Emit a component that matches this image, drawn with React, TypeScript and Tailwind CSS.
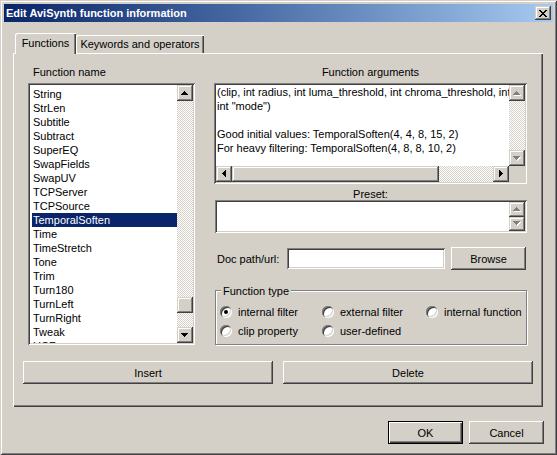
import React from 'react';

const raised =
  'shadow-[inset_-1px_-1px_#404040,inset_1px_1px_#ffffff,inset_-2px_-2px_#808080,inset_2px_2px_#d4d0c8]';
const scrollBtn =
  'shadow-[inset_-1px_-1px_#404040,inset_1px_1px_#d4d0c8,inset_-2px_-2px_#808080,inset_2px_2px_#ffffff]';
const sunken =
  'shadow-[inset_1px_1px_#808080,inset_-1px_-1px_#ffffff,inset_2px_2px_#404040,inset_-2px_-2px_#d4d0c8]';
const track =
  'bg-[image:repeating-conic-gradient(#ffffff_0%_25%,#d4d0c8_0%_50%)] bg-[length:2px_2px]';

const functions = [
  'String',
  'StrLen',
  'Subtitle',
  'Subtract',
  'SuperEQ',
  'SwapFields',
  'SwapUV',
  'TCPServer',
  'TCPSource',
  'TemporalSoften',
  'Time',
  'TimeStretch',
  'Tone',
  'Trim',
  'Turn180',
  'TurnLeft',
  'TurnRight',
  'Tweak',
  'UCF',
];

const argsText = [
  '(clip, int radius, int luma_threshold, int chroma_threshold, int scenechange,',
  'int "mode")',
  '',
  'Good initial values: TemporalSoften(4, 4, 8, 15, 2)',
  'For heavy filtering: TemporalSoften(4, 8, 8, 10, 2)',
];

type Dir = 'up' | 'down' | 'left' | 'right';

function Arrow({ dir, gray = false }: { dir: Dir; gray?: boolean }) {
  const vertical = dir === 'up' || dir === 'down';
  const w = vertical ? 7 : 4;
  const h = vertical ? 4 : 7;
  const rects = [1, 3, 5, 7].map((len, i) => {
    const off = (7 - len) / 2;
    const k = dir === 'up' || dir === 'left' ? i : 3 - i;
    return vertical ? { x: off, y: k, w: len, h: 1 } : { x: k, y: off, w: 1, h: len };
  });
  return (
    <svg width={w + 1} height={h + 1} viewBox={`0 0 ${w + 1} ${h + 1}`} shapeRendering="crispEdges">
      {gray &&
        rects.map((r, i) => (
          <rect key={'s' + i} x={r.x + 1} y={r.y + 1} width={r.w} height={r.h} fill="#ffffff" />
        ))}
      {rects.map((r, i) => (
        <rect key={i} x={r.x} y={r.y} width={r.w} height={r.h} fill={gray ? '#808080' : '#000000'} />
      ))}
    </svg>
  );
}

function ScrollButton({ dir, gray, className = '' }: { dir: Dir; gray?: boolean; className?: string }) {
  return (
    <div className={`bg-[#d4d0c8] flex items-center justify-center ${scrollBtn} ${className}`}>
      <Arrow dir={dir} gray={gray} />
    </div>
  );
}

function CloseX() {
  const px = [
    [0, 0], [1, 0], [6, 0], [7, 0],
    [1, 1], [2, 1], [5, 1], [6, 1],
    [2, 2], [3, 2], [4, 2], [5, 2],
    [3, 3], [4, 3],
    [2, 4], [3, 4], [4, 4], [5, 4],
    [1, 5], [2, 5], [5, 5], [6, 5],
    [0, 6], [1, 6], [6, 6], [7, 6],
  ];
  return (
    <svg width="8" height="7" shapeRendering="crispEdges">
      {px.map(([x, y]) => (
        <rect key={`${x}-${y}`} x={x} y={y} width="1" height="1" fill="#000000" />
      ))}
    </svg>
  );
}

function Radio({ label, checked = false }: { label: string; checked?: boolean }) {
  return (
    <div className="flex items-center h-[18px]">
      <div className={`w-[12px] h-[12px] rounded-full bg-white flex items-center justify-center ${sunken}`}>
        {checked && <div className="w-[4px] h-[4px] rounded-full bg-black" />}
      </div>
      <span className="ml-[6px]">{label}</span>
    </div>
  );
}

function Button({ label, className = '' }: { label: string; className?: string }) {
  return (
    <div className={`h-[23px] bg-[#d4d0c8] flex items-center justify-center ${raised} ${className}`}>
      {label}
    </div>
  );
}

export default function App() {
  return (
    <div className="w-[557px] h-[455px] bg-[#d4d0c8] p-[4px] flex flex-col font-['Liberation_Sans',Arial,sans-serif] text-[11px] leading-[14px] text-black shadow-[inset_1px_1px_#d4d0c8,inset_-1px_-1px_#404040,inset_2px_2px_#ffffff,inset_-2px_-2px_#808080]">
      {/* Title bar */}
      <div className="h-[18px] flex items-center pl-[2px] pr-[2px] bg-linear-to-r from-[#0a246a] to-[#a6caf0]">
        <span className="flex-1 font-bold text-white">Edit AviSynth function information</span>
        <div className={`w-[16px] h-[14px] bg-[#d4d0c8] flex items-center justify-center pr-[1px] ${scrollBtn}`}>
          <CloseX />
        </div>
      </div>

      {/* Client area */}
      <div className="flex-1 flex flex-col px-[9px] pt-[11px]">
        {/* Tabs */}
        <div className="flex items-start h-[20px] pl-[2px]">
          <div className="relative z-10 w-[61px] h-[21px] bg-[#d4d0c8] flex items-center justify-center pb-[1px] rounded-tl-[2px] shadow-[inset_1px_1px_#ffffff,inset_-1px_0_#404040,inset_-2px_0_#808080]">
            Functions
          </div>
          <div className="mt-[2px] w-[128px] h-[18px] flex items-center justify-center rounded-tl-[2px] shadow-[inset_1px_1px_#ffffff,inset_-1px_0_#404040,inset_-2px_0_#808080]">
            Keywords and operators
          </div>
        </div>

        {/* Tab panel */}
        <div className="w-[530px] h-[354px] flex flex-col shadow-[inset_1px_1px_#ffffff,inset_-1px_-1px_#404040,inset_-2px_-2px_#808080]">
          <div className="flex pt-[12px] pl-[15px]">
            {/* Function list */}
            <div className="w-[167px] flex flex-col">
              <div className="h-[14px] mb-[4px] pl-[5px]">Function name</div>
              <div className={`h-[262px] p-[2px] bg-white flex ${sunken}`}>
                <div className="flex-1 overflow-hidden pt-[2px] pl-[2px]">
                  {functions.map((name) => (
                    <div
                      key={name}
                      className={`h-[14px] pl-[1px] whitespace-nowrap ${
                        name === 'TemporalSoften' ? 'bg-[#0a246a] text-white' : ''
                      }`}
                    >
                      {name}
                    </div>
                  ))}
                </div>
                <div className="w-[16px] flex flex-col">
                  <ScrollButton dir="up" className="h-[16px]" />
                  <div className={`flex-1 flex flex-col ${track}`}>
                    <div className="flex-1" />
                    <div className={`h-[16px] bg-[#d4d0c8] ${scrollBtn}`} />
                    <div className="h-[14px]" />
                  </div>
                  <ScrollButton dir="down" className="h-[16px]" />
                </div>
              </div>
            </div>

            {/* Right column */}
            <div className="w-[313px] ml-[19px] flex flex-col">
              <div className="h-[14px] mb-[4px] text-center">Function arguments</div>
              <div className={`h-[101px] p-[2px] bg-white grid grid-cols-[1fr_16px] grid-rows-[1fr_16px] ${sunken}`}>
                <div className="overflow-hidden whitespace-pre pl-[1px]">
                  {argsText.map((line, i) => (
                    <div key={i} className="h-[14px]">
                      {line}
                    </div>
                  ))}
                </div>
                <div className="flex flex-col">
                  <ScrollButton dir="up" gray className="h-[16px]" />
                  <div className={`flex-1 ${track}`} />
                  <ScrollButton dir="down" gray className="h-[16px]" />
                </div>
                <div className="flex">
                  <ScrollButton dir="left" className="w-[16px]" />
                  <div className={`flex-1 flex ${track}`}>
                    <div className={`w-[207px] bg-[#d4d0c8] ${scrollBtn}`} />
                  </div>
                  <ScrollButton dir="right" className="w-[16px]" />
                </div>
                <div className="bg-[#d4d0c8]" />
              </div>

              <div className="mt-[4px] h-[12px] leading-[12px] text-center">Preset:</div>
              <div className={`h-[33px] p-[2px] bg-white flex ml-[1px] ${sunken}`}>
                <div className="flex-1" />
                <div className="w-[16px] flex flex-col">
                  <ScrollButton dir="up" gray className="flex-1" />
                  <ScrollButton dir="down" gray className="flex-1" />
                </div>
              </div>

              <div className="mt-[14px] h-[23px] flex items-center">
                <div className="w-[73px] pl-[3px]">Doc path/url:</div>
                <div className={`w-[158px] h-[21px] bg-white ${sunken}`} />
                <Button label="Browse" className="ml-[6px] w-[75px]" />
              </div>

              <div className="mt-[20px] ml-[1px] w-[312px] h-[55px] flex flex-col border border-[#808080] shadow-[inset_1px_1px_#ffffff,1px_1px_#ffffff]">
                <div className="-mt-[7px] ml-[5px] px-[2px] w-fit bg-[#d4d0c8] h-[14px]">Function type</div>
                <div className="pt-[5px] pl-[4px] grid grid-cols-[102px_104px_1fr] gap-y-[1px]">
                  <Radio label="internal filter" checked />
                  <Radio label="external filter" />
                  <Radio label="internal function" />
                  <Radio label="clip property" />
                  <Radio label="user-defined" />
                </div>
              </div>
            </div>
          </div>

          <div className="mt-[16px] pl-[10px] flex gap-[10px]">
            <Button label="Insert" className="w-[250px]" />
            <Button label="Delete" className="w-[250px]" />
          </div>
        </div>

        {/* Dialog buttons */}
        <div className="mt-[14px] flex justify-end gap-[6px]">
          <div className="w-[75px] h-[23px] border border-black bg-[#d4d0c8] flex items-center justify-center shadow-[inset_1px_1px_#ffffff,inset_-1px_-1px_#404040,inset_-2px_-2px_#808080]">
            OK
          </div>
          <Button label="Cancel" className="w-[75px]" />
        </div>
      </div>
    </div>
  );
}
